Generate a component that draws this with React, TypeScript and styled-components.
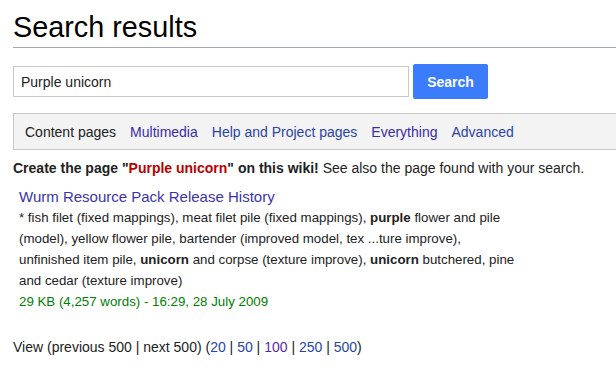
import styled, { createGlobalStyle } from 'styled-components';

const GlobalStyle = createGlobalStyle`
  html, body {
    margin: 0;
    padding: 0;
    background: #fff;
  }
  body {
    font-family: "Liberation Sans", Arial, sans-serif;
    color: #222;
  }
`;

const Page = styled.div`
  padding-left: 13px;
  width: 603px;
  overflow: hidden;
`;

const Heading = styled.h1`
  margin: 9px 0 0;
  padding-bottom: 1px;
  font-size: 28.8px;
  font-weight: normal;
  line-height: 1.3;
  color: #000;
  border-bottom: 1px solid #a2a9b1;
`;

const SearchRow = styled.form`
  display: flex;
  align-items: center;
  gap: 4px;
  margin-top: 16px;
  height: 35px;
`;

const SearchInput = styled.input`
  box-sizing: border-box;
  width: 396px;
  height: 31px;
  padding: 0 7px;
  border: 1px solid #c8c8c8;
  font-family: inherit;
  font-size: 14px;
  color: #222;
  outline: none;
`;

const SearchButton = styled.button`
  width: 75px;
  height: 35px;
  border: none;
  border-radius: 2px;
  background: #3a7cfc;
  color: #fff;
  font-family: inherit;
  font-size: 14px;
  font-weight: bold;
  cursor: pointer;
`;

const Tabs = styled.div`
  display: flex;
  align-items: center;
  gap: 14px;
  box-sizing: border-box;
  height: 37px;
  margin-top: 14px;
  padding-left: 11px;
  background: #f3f3f3;
  border: 1px solid #c8c8c8;
  border-right: none;
  font-size: 14px;
`;

const Tab = styled.a<{ $active?: boolean; $visited?: boolean }>`
  color: ${(p) => (p.$active ? '#222' : p.$visited ? '#3a2ca8' : '#2a44a8')};
  text-decoration: none;
  white-space: nowrap;
`;

const CreateNote = styled.p`
  margin: 8px 0 0;
  font-size: 14px;
  line-height: 20px;
`;

const RedLink = styled.a`
  color: #ba0000;
  text-decoration: none;
`;

const Results = styled.ul`
  list-style: none;
  margin: 9px 0 0 6px;
  padding: 0;
  width: 497px;
`;

const ResultTitle = styled.a`
  display: block;
  font-size: 15px;
  line-height: 20px;
  color: #3a34ac;
  text-decoration: none;
`;

const Snippet = styled.div`
  font-size: 13.3px;
  line-height: 21px;
  color: #222;
`;

const Meta = styled.div`
  font-size: 13.3px;
  line-height: 21px;
  color: #008000;
`;

const Pager = styled.p`
  margin: 25px 0 0;
  font-size: 14px;
  line-height: 20px;
`;

const PageLink = styled.a<{ $visited?: boolean }>`
  color: ${(p) => (p.$visited ? '#5a2aa0' : '#2a44a8')};
  text-decoration: none;
`;

const tabs = [
  { label: 'Content pages', active: true },
  { label: 'Multimedia', visited: true },
  { label: 'Help and Project pages' },
  { label: 'Everything', visited: true },
  { label: 'Advanced' },
];

const limits = ['20', '50', '100', '250', '500'];

const App = () => {
  return (
    <>
      <GlobalStyle />
      <Page>
        <Heading>Search results</Heading>
        <SearchRow onSubmit={(e) => e.preventDefault()}>
          <SearchInput defaultValue="Purple unicorn" />
          <SearchButton type="submit">Search</SearchButton>
        </SearchRow>
        <Tabs>
          {tabs.map((t) => (
            <Tab key={t.label} $active={t.active} $visited={t.visited}>
              {t.label}
            </Tab>
          ))}
        </Tabs>
        <CreateNote>
          <b>
            Create the page "<RedLink>Purple unicorn</RedLink>" on this wiki!
          </b>{' '}
          See also the page found with your search.
        </CreateNote>
        <Results>
          <li>
            <ResultTitle>Wurm Resource Pack Release History</ResultTitle>
            <Snippet>
              * fish filet (fixed mappings), meat filet pile (fixed mappings), <b>purple</b> flower
              and pile (model), yellow flower pile, bartender (improved model, tex ...ture
              improve), unfinished item pile, <b>unicorn</b> and corpse (texture improve),{' '}
              <b>unicorn</b> butchered, pine and cedar (texture improve)
            </Snippet>
            <Meta>29 KB (4,257 words) - 16:29, 28 July 2009</Meta>
          </li>
        </Results>
        <Pager>
          View (previous 500 | next 500) (
          {limits.map((n, i) => (
            <span key={n}>
              {i > 0 && ' | '}
              <PageLink $visited={n === '100'}>{n}</PageLink>
            </span>
          ))}
          )
        </Pager>
      </Page>
    </>
  );
};

export default App;
